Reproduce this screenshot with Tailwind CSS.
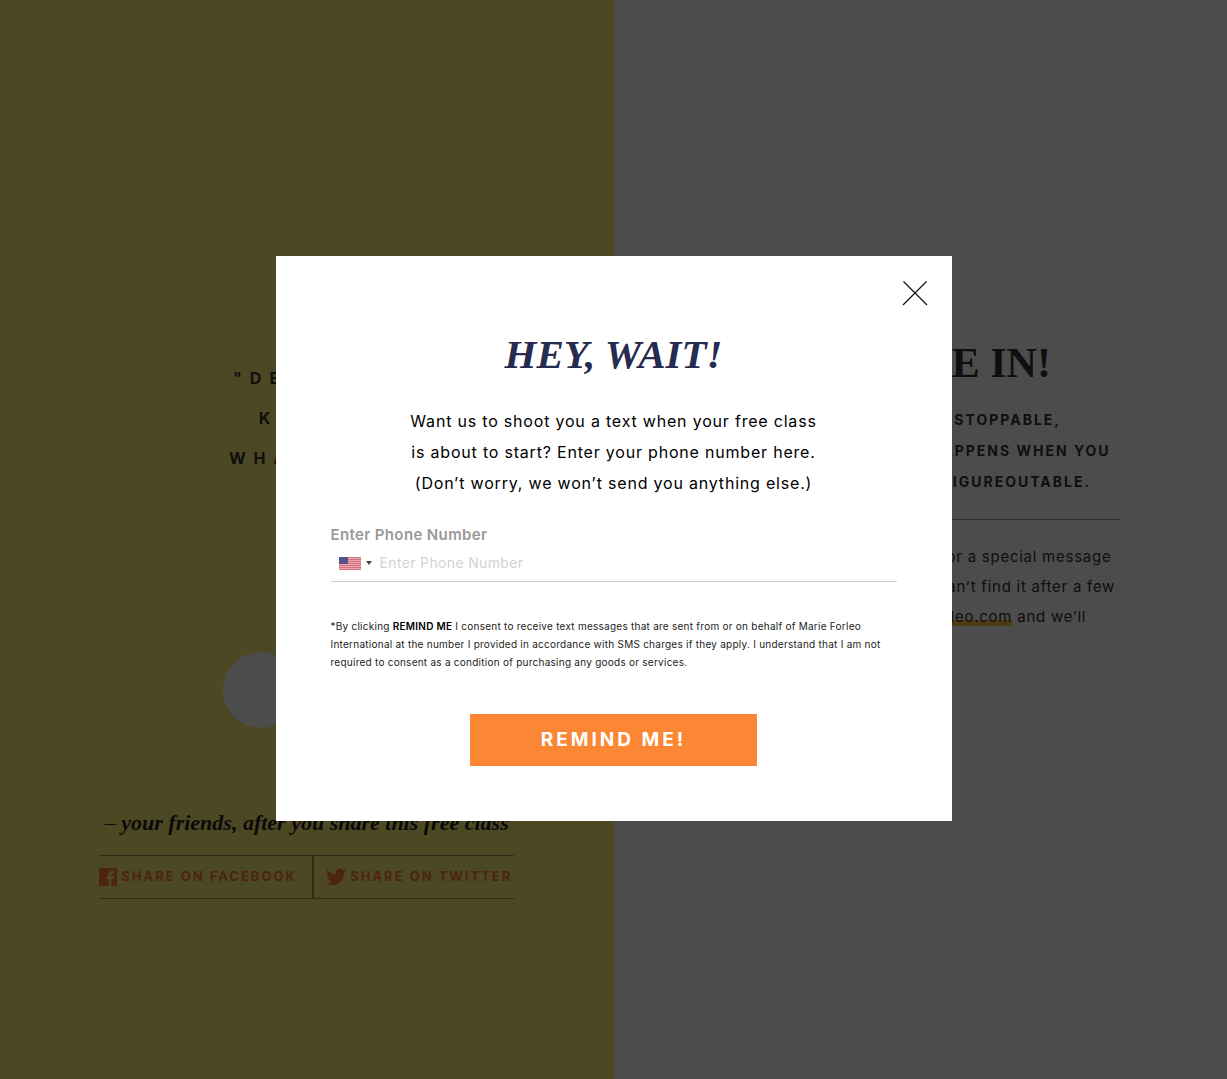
<!DOCTYPE html>
<html lang="en">
<head>
<meta charset="utf-8">
<meta name="viewport" content="width=device-width, initial-scale=1">
<title>You're In!</title>
<script src="https://cdn.jsdelivr.net/npm/@tailwindcss/browser@4"></script>
</head>
<body class="font-[Inter,sans-serif] text-black">
<main class="grid min-h-screen grid-cols-2">
  <section class="flex flex-col items-center bg-[#fff075] pt-[358px]">
    <p class="text-center text-base leading-10 font-bold tracking-[8px] text-[#333]">"DEAREST<br>KNOW,<br>WHATEVER</p>
    <div class="mt-[174px] flex gap-4">
      <span class="size-[76px] rounded-full bg-white"></span>
      <span class="size-[76px] rounded-full bg-white"></span>
    </div>
    <p class="mt-[79px] font-['Liberation_Serif',serif] text-[22px] leading-8 font-bold whitespace-nowrap text-[#222] italic"><span class="font-normal">–</span> your friends, after you share this free class</p>
    <div class="mt-4 flex h-11 w-[415px] border-y border-[#a09050] text-[13px] font-bold tracking-[2px] whitespace-nowrap text-[#ff7838]">
      <a href="#facebook" class="flex flex-1 items-center gap-1 border-r-2 border-[#a09050]">
        <svg class="size-[18px] shrink-0" viewBox="0 0 18 18" fill="currentColor"><path d="M0 0H18V18H12.4V11H14.7L15.1 8.3H12.4V6.6C12.4 5.8 12.8 5.2 13.8 5.2H15.2V2.9C14.9 2.8 14 2.7 13.2 2.7C11 2.7 9.6 4 9.6 6.3V8.3H7.2V11H9.6V18H0Z"/></svg>
        SHARE ON FACEBOOK</a>
      <a href="#twitter" class="flex items-center gap-1 pr-0.5 pl-3">
        <svg class="size-5 shrink-0" viewBox="0 0 24 24" fill="currentColor"><path d="M24 4.6c-.9.4-1.800.7-2.800.8 1-.6 1.800-1.600 2.200-2.700-1 .6-2 1-3.100 1.200A4.900 4.900 0 0 0 11.900 8.400C7.700 8.200 4.100 6.200 1.700 3.200c-1.300 2.200-.7 5.100 1.500 6.600-.8 0-1.600-.2-2.200-.6 0 2.300 1.600 4.400 3.900 4.900-.7.2-1.500.2-2.200.1.600 2 2.400 3.400 4.600 3.400A9.900 9.900 0 0 1 0 19.500 14 14 0 0 0 7.500 21.700c9.100 0 14.300-7.700 14-14.600.9-.7 1.800-1.600 2.500-2.500z"/></svg>
        SHARE ON TWITTER</a>
    </div>
  </section>
  <section class="flex flex-col items-center bg-white pt-[340px] text-center whitespace-nowrap text-[#333]">
    <h1 class="font-['Liberation_Serif',serif] text-[42px] leading-[46px] font-bold">YOU ARE IN!</h1>
    <p class="mt-[18px] text-sm leading-[31px] font-bold tracking-[2px]">SOON YOU’LL BE UNSTOPPABLE,<br>BECAUSE THAT MAGIC HAPPENS WHEN YOU<br>KNOW THAT IT IS ALL FIGUREOUTABLE.</p>
    <hr class="mt-[22px] w-[400px] border-[#999]">
    <p class="mt-[22px] text-[15px] leading-[30px] tracking-wider">Keep an eye on your inbox for a special message<br>from me, and if you simply can’t find it after a few<br>then email <a href="#email" class="shadow-[inset_0_-6px_#ffc845]">info@marieforleo.com</a> and we’ll</p>
  </section>
</main>

<div class="fixed inset-0 flex items-center justify-center bg-black/70 pb-0.5">
  <form role="dialog" aria-labelledby="title" class="relative flex w-[676px] flex-col bg-white px-[55px] pt-[75px] pb-[55px]">
    <button type="button" aria-label="Close" class="absolute top-6 right-6"><svg class="size-[26px]" viewBox="0 0 26 26" fill="none" stroke="#111" stroke-width="1.2"><path d="M1.500 1.500L25 25M24.500 1.500L1 25"/></svg></button>
    <h2 id="title" class="text-center font-['Liberation_Serif',serif] text-[41px] leading-[46px] font-bold text-[#262b50] italic">HEY, WAIT!</h2>
    <p class="mt-[29px] text-center text-base leading-[31px] tracking-wider">Want us to shoot you a text when your free class<br>is about to start? Enter your phone number here.<br>(Don’t worry, we won’t send you anything else.)</p>
    <label for="phone" class="mt-[26px] text-[15px] leading-5 font-semibold tracking-wide text-[#999]">Enter Phone Number</label>
    <div class="flex h-[37px] items-center border-b border-[#ccc] pl-2">
      <button type="button" aria-label="Country" class="flex items-center gap-[5px]">
        <svg class="h-[13px] w-[22px]" viewBox="0 0 22 13"><path fill="#e8a9b0" d="M0 0h22v13H0z"/><path stroke="#d4707f" d="M0 .5h22M0 2.500h22M0 4.500h22M0 6.500h22M0 8.500h22M0 10.500h22M0 12.500h22"/><path fill="#54548c" d="M0 0h9v7H0z"/></svg>
        <svg class="h-1 w-[6px]" viewBox="0 0 6 4"><path fill="#444" d="M0 0h6L3 4z"/></svg>
      </button>
      <input id="phone" type="tel" placeholder="Enter Phone Number" class="ml-2 min-w-0 flex-1 text-sm tracking-wide outline-none placeholder:text-[#d3d3d3]">
    </div>
    <p class="mt-[35px] text-[10px] leading-[18px] tracking-wide text-[#222]">*By clicking <b class="font-semibold text-black">REMIND ME</b> I consent to receive text messages that are sent from or on behalf of Marie Forleo<br>International at the number I provided in accordance with SMS charges if they apply. I understand that I am not<br>required to consent as a condition of purchasing any goods or services.</p>
    <button type="submit" class="mt-[43px] h-[52px] w-[287px] self-center bg-[#fb8735] text-[19px] font-bold tracking-[3px] text-white">REMIND ME!</button>
  </form>
</div>
</body>
</html>
